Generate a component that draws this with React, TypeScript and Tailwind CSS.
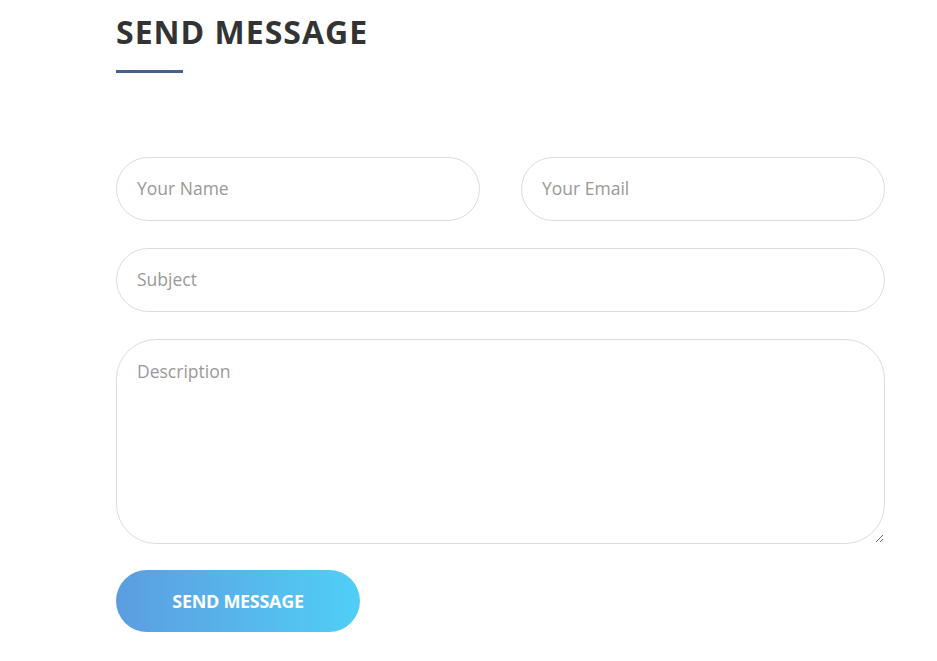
export default function App() {
  return (
    <div className="min-h-screen bg-white" style={{ fontFamily: '"Open Sans", sans-serif' }}>
      <div className="pl-[116px] pr-[52px] pt-[10px]">
        <h2 className="text-[32px] font-bold leading-[44px] tracking-[1px] text-[#333333]">SEND MESSAGE</h2>
        <div className="mt-[16px] h-[3px] w-[67px] bg-[#44608f]" />

        <form className="mt-[84px] flex flex-col gap-[27px]">
          <div className="flex gap-[41px]">
            <input
              type="text"
              placeholder="Your Name"
              className="h-[64px] flex-1 rounded-full border border-[#dcdcdc] px-[20px] pb-[2px] text-[17.5px] text-[#555] outline-none placeholder:text-[#999999]"
            />
            <input
              type="email"
              placeholder="Your Email"
              className="h-[64px] flex-1 rounded-full border border-[#dcdcdc] px-[20px] pb-[2px] text-[17.5px] text-[#555] outline-none placeholder:text-[#999999]"
            />
          </div>
          <input
            type="text"
            placeholder="Subject"
            className="h-[64px] w-full rounded-full border border-[#dcdcdc] px-[20px] pb-[2px] text-[17.5px] text-[#555] outline-none placeholder:text-[#999999]"
          />
          <textarea
            placeholder="Description"
            className="h-[205px] w-full rounded-[40px] border border-[#dcdcdc] px-[20px] pt-[18px] text-[17.5px] text-[#555] outline-none placeholder:text-[#999999]"
          />
          <div>
            <button
              type="button"
              className="-mt-[1px] h-[62px] w-[244px] rounded-full bg-gradient-to-r from-[#5b9de0] to-[#4fcff6] text-[18px] font-bold tracking-[-0.3px] text-white"
            >
              SEND MESSAGE
            </button>
          </div>
        </form>
      </div>
    </div>
  );
}
